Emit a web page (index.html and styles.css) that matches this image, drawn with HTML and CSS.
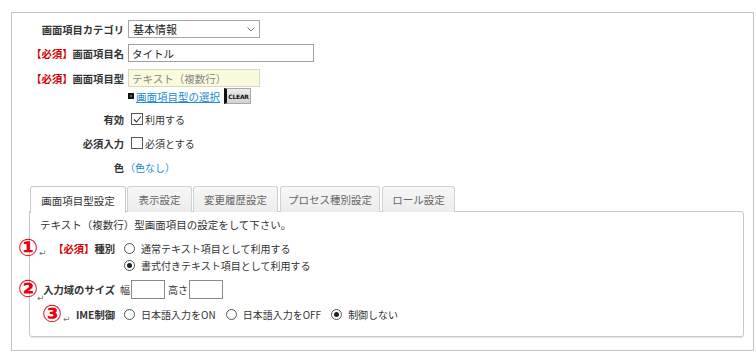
FILE: index.html
```html
<!DOCTYPE html>
<html lang="ja">
  <head>
    <meta charset="UTF-8" />
    <title>画面項目設定</title>
    <link rel="stylesheet" href="styles.css">
  </head>
  <body>
    <div class="frame">
      <div class="form">
        <div class="row r1">
          <div class="lbl">画面項目カテゴリ</div>
          <div class="val">
            <div class="select">
              <span>基本情報</span>
              <svg width="8" height="5" viewBox="0 0 8 5"><path d="M0.5 0.5 L4 4 L7.5 0.5" fill="none" stroke="#777" stroke-width="1"/></svg>
            </div>
          </div>
        </div>
        <div class="row r2">
          <div class="lbl"><span class="req">【必須】</span>画面項目名</div>
          <div class="val"><div class="text wide">タイトル</div></div>
        </div>
        <div class="row r3">
          <div class="lbl"><span class="req">【必須】</span>画面項目型</div>
          <div class="val"><div class="text readonly">テキスト（複数行）</div></div>
        </div>
        <div class="row r3b">
          <div class="lbl"></div>
          <div class="val">
            <span class="bullet"></span>
            <a href="#" class="link">画面項目型の選択</a>
            <span class="clear">CLEAR</span>
          </div>
        </div>
        <div class="row r4">
          <div class="lbl">有効</div>
          <div class="val">
            <span class="check on">
              <svg width="9" height="9" viewBox="0 0 9 9"><path d="M1 4.5 L3.5 7 L8 1.5" fill="none" stroke="#333" stroke-width="1.1"/></svg>
            </span>利用する
          </div>
        </div>
        <div class="row r5">
          <div class="lbl">必須入力</div>
          <div class="val"><span class="check"></span>必須とする</div>
        </div>
        <div class="row r6">
          <div class="lbl">色</div>
          <div class="val"><span class="color">（色なし）</span></div>
        </div>
      </div>

      <div class="tabs">
        <div class="tab active">画面項目型設定</div>
        <div class="tab">表示設定</div>
        <div class="tab">変更履歴設定</div>
        <div class="tab">プロセス種別設定</div>
        <div class="tab">ロール設定</div>
      </div>

      <div class="panel">
        <p class="intro">テキスト（複数行）型画面項目の設定をして下さい。</p>

        <div class="prow p1">
          <div class="plbl"><span class="req">【必須】</span>種別</div>
          <div class="pval stack">
            <label class="opt"><span class="radio"></span>通常テキスト項目として利用する</label>
            <label class="opt"><span class="radio on"></span>書式付きテキスト項目として利用する</label>
          </div>
        </div>

        <div class="prow p2">
          <div class="plbl">入力域のサイズ</div>
          <div class="pval">
            <span class="unit">幅</span><span class="box"></span>
            <span class="unit gap">高さ</span><span class="box"></span>
          </div>
        </div>

        <div class="prow p3">
          <div class="plbl">IME制御</div>
          <div class="pval">
            <label class="opt"><span class="radio"></span>日本語入力をON</label>
            <label class="opt"><span class="radio"></span>日本語入力をOFF</label>
            <label class="opt"><span class="radio on"></span>制御しない</label>
          </div>
        </div>

        <!-- annotation marks -->
        <span class="mark m1">①</span><span class="ret r-1">↵</span>
        <span class="mark m2">②</span><span class="ret r-2">↵</span>
        <span class="mark m3">③</span><span class="ret r-3">↵</span>
      </div>
    </div>
  </body>
</html>
```

FILE: styles.css
```css
* {
  margin: 0;
  padding: 0;
  box-sizing: border-box;
}

body {
  background: #ffffff;
  color: #333333;
  font-family: "Noto Sans CJK JP", "Noto Sans", sans-serif;
  font-size: 10px;
}

.frame {
  margin: 12px 0 0 11px;
  width: 743px;
  height: 339px;
  border: 1px solid #c4c4c4;
}

/* top form */
.form {
  padding-top: 7px;
}

.row {
  display: flex;
  align-items: center;
  height: 18px;
}

.lbl {
  width: 112px;
  text-align: right;
  font-weight: 700;
  font-size: 10.3px;
  color: #333;
  white-space: nowrap;
}

.req {
  color: #d40000;
}

.val {
  margin-left: 4px;
  display: flex;
  align-items: center;
  white-space: nowrap;
}

.r2 { margin-top: 6px; }
.r3 { margin-top: 7px; }
.r3b { margin-top: 1px; height: 16px; }
.r4 { margin-top: 5px; height: 20px; }
.r5 { margin-top: 4px; height: 20px; }
.r6 { margin-top: 4px; height: 20px; }

.select {
  width: 132px;
  height: 18px;
  border: 1px solid #a6a6a6;
  display: flex;
  align-items: center;
  justify-content: space-between;
  padding: 0 4px 0 4px;
  font-size: 11px;
  color: #222;
}

.text {
  height: 18px;
  border: 1px solid #a0a0a0;
  padding: 0 3px;
  display: flex;
  align-items: center;
  font-size: 10.5px;
  color: #222;
}

.text.wide {
  width: 186px;
}

.text.readonly {
  width: 132px;
  background: #fafadc;
  border-color: #d8d8c0;
  color: #888;
}

.bullet {
  width: 6px;
  height: 6px;
  border: 2px solid #111;
  background: #666;
  margin-right: 2px;
}

.link {
  color: #1a8ad4;
  font-size: 10.5px;
  text-decoration: underline;
}

.clear {
  margin-left: 4px;
  width: 27px;
  height: 16px;
  background: linear-gradient(#ececec, #d2d2d2);
  border: 1px solid #a8a8a8;
  border-left: 3px solid #111;
  font-family: "DejaVu Sans", sans-serif;
  font-size: 6px;
  font-weight: 700;
  color: #111;
  display: flex;
  align-items: center;
  justify-content: center;
  letter-spacing: -0.2px;
}

.check {
  width: 12px;
  height: 12px;
  border: 1px solid #555;
  margin: 0 2px 0 3px;
  display: inline-flex;
  align-items: center;
  justify-content: center;
  background: #fff;
}

.color {
  color: #1a8ad4;
  margin-left: -3px;
}

/* tabs */
.tabs {
  display: flex;
  gap: 1px;
  margin: 9px 0 0 18px;
  height: 26px;
  position: relative;
  z-index: 1;
}

.tab {
  height: 26px;
  border: 1px solid #d2d2d2;
  border-bottom: none;
  border-radius: 3px 3px 0 0;
  background: linear-gradient(#f7f7f7, #ececec);
  color: #666;
  font-size: 10.5px;
  white-space: nowrap;
  display: flex;
  align-items: center;
  justify-content: center;
}

.tab:nth-child(1) { width: 96px; }
.tab:nth-child(2) { width: 65px; }
.tab:nth-child(3) { width: 85px; }
.tab:nth-child(4) { width: 100px; margin-left: 1px; }
.tab:nth-child(5) { width: 73px; margin-left: 1px; }

.tab.active {
  background: #fff;
  color: #333;
  height: 27px;
  border-color: #c8c8c8;
}

/* panel */
.panel {
  position: relative;
  margin: -1px 9px 0 17px;
  height: 126px;
  border: 1px solid #c8c8c8;
  border-radius: 0 3px 3px 3px;
  box-shadow: 0 1px 1px #e4e4e4;
  padding: 5px 0 0 0;
}

.intro {
  padding-left: 10px;
  line-height: 16px;
  font-size: 10.5px;
}

.prow {
  display: flex;
  align-items: flex-start;
}

.plbl {
  width: 85px;
  text-align: right;
  font-weight: 700;
  font-size: 10.3px;
  color: #333;
  white-space: nowrap;
  line-height: 17px;
}

.pval {
  margin-left: 4px;
  display: flex;
  align-items: center;
  white-space: nowrap;
}

.pval.stack {
  flex-direction: column;
  align-items: flex-start;
}

.p1 { margin-top: 7px; }
.p2 { margin-top: 6px; align-items: center; }
.p3 { margin-top: 7px; align-items: center; }

.opt {
  display: flex;
  align-items: center;
  height: 17px;
  margin-right: 5px;
  font-size: 10px;
}

.radio {
  width: 11px;
  height: 11px;
  border: 1px solid #555;
  border-radius: 50%;
  margin: 0 6px 0 5px;
  display: inline-flex;
  align-items: center;
  justify-content: center;
}

.radio.on::after {
  content: "";
  width: 5px;
  height: 5px;
  border-radius: 50%;
  background: #222;
}

.unit {
  margin-left: 1px;
}

.unit.gap {
  margin-left: 3px;
}

.box {
  width: 34px;
  height: 19px;
  border: 1px solid #8a8a8a;
  margin-left: 1px;
}

/* red annotation marks drawn over the panel */
.mark {
  position: absolute;
  color: #e60012;
  font-family: "DejaVu Sans", sans-serif;
  font-size: 24px;
  font-weight: 700;
  line-height: 20px;
}

.m1 { left: -12px; top: 26px; }
.m2 { left: -12px; top: 67px; }
.m3 { left: 12px; top: 92px; }

.ret {
  position: absolute;
  color: #777;
  font-family: "DejaVu Sans", sans-serif;
  font-size: 9px;
  line-height: 9px;
}

.r-1 { left: 9px; top: 37px; }
.r-2 { left: 7px; top: 82px; }
.r-3 { left: 33px; top: 103px; }
```
